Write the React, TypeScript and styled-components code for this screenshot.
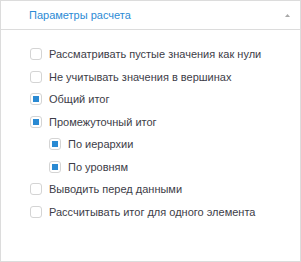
import React from 'react';
import styled, { createGlobalStyle } from 'styled-components';

const GlobalStyle = createGlobalStyle`
  html, body {
    margin: 0;
    padding: 0;
    background: #ffffff;
  }
`;

type Option = {
  label: string;
  checked: boolean;
  nested?: boolean;
};

const options: Option[] = [
  { label: 'Рассматривать пустые значения как нули', checked: false },
  { label: 'Не учитывать значения в вершинах', checked: false },
  { label: 'Общий итог', checked: true },
  { label: 'Промежуточный итог', checked: true },
  { label: 'По иерархии', checked: true, nested: true },
  { label: 'По уровням', checked: true, nested: true },
  { label: 'Выводить перед данными', checked: false },
  { label: 'Рассчитывать итог для одного элемента', checked: false },
];

export default function App() {
  return (
    <>
      <GlobalStyle />
      <Panel>
        <Header>
          <Title>Параметры расчета</Title>
          <Collapse viewBox="0 0 5 3" width={5} height={3}>
            <polygon points="2.5,0 5,3 0,3" fill="#a8a8a8" />
          </Collapse>
        </Header>
        <Body>
          {options.map((o) => (
            <Row key={o.label} $nested={o.nested}>
              <Box>{o.checked && <Mark />}</Box>
              <Label>{o.label}</Label>
            </Row>
          ))}
        </Body>
      </Panel>
    </>
  );
}

const Panel = styled.div`
  width: 301px;
  height: 262px;
  box-sizing: border-box;
  border: 1px solid #dcdcdc;
  background: #fff;
  font-family: 'Liberation Sans', Arial, sans-serif;
  font-size: 11px;
  display: flex;
  flex-direction: column;
`;

const Header = styled.div`
  height: 29px;
  flex: none;
  box-sizing: border-box;
  border-bottom: 1px solid #dcdcdc;
  display: flex;
  align-items: center;
  justify-content: space-between;
  padding: 0 10px 0 28px;
`;

const Title = styled.span`
  color: #2c8bd5;
`;

const Collapse = styled.svg`
  display: block;
  margin-top: 1px;
`;

const Body = styled.div`
  padding: 13px 0 0 29px;
  display: flex;
  flex-direction: column;
`;

const Row = styled.div<{ $nested?: boolean }>`
  height: 22.5px;
  display: flex;
  align-items: center;
  gap: 7px;
  padding-left: ${(p) => (p.$nested ? '19px' : '0')};
`;

const Box = styled.span`
  width: 12px;
  height: 12px;
  box-sizing: border-box;
  border: 1px solid #d4d4d4;
  border-radius: 3px;
  background: #fff;
  display: flex;
  align-items: center;
  justify-content: center;
  flex: none;
`;

const Mark = styled.span`
  width: 6px;
  height: 6px;
  background: #2a8ad3;
`;

const Label = styled.span`
  color: #3d3d48;
  white-space: nowrap;
`;
